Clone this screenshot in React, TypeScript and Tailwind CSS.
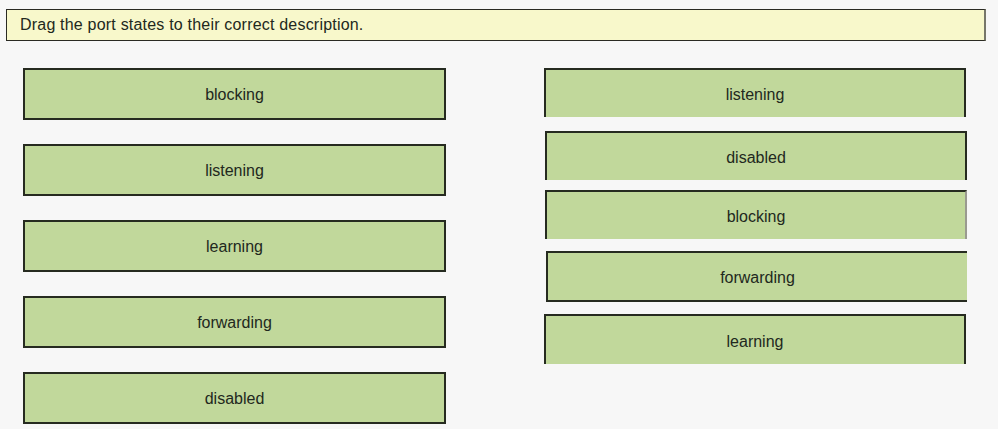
const leftItems = ["blocking", "listening", "learning", "forwarding", "disabled"];

// right column: the cards sit a little unevenly and some edges are missing
const rightItems = [
  { label: "listening", cls: "mt-0 ml-0 w-[422px] h-[49px] border-t-2 border-l-2 border-r-2" },
  { label: "disabled", cls: "mt-[14px] ml-[1px] w-[422px] h-[49px] border-t-2 border-l-2 border-r-2" },
  { label: "blocking", cls: "mt-[10px] ml-[1px] w-[422px] h-[49px] border-t-2 border-l-2 border-r-2 border-r-[#9a9a90]" },
  { label: "forwarding", cls: "mt-[12px] ml-[2px] w-[421px] h-[51px] border-t-2 border-l-2 border-b-2" },
  { label: "learning", cls: "mt-[12px] ml-0 w-[422px] h-[50px] border-t-2 border-l-2 border-r-2" },
];

export default function App() {
  return (
    <div
      className="w-[998px] h-[429px] bg-[#f7f7f7] overflow-hidden text-[#222820]"
      style={{ fontFamily: '"Liberation Sans", Arial, sans-serif' }}
    >
      {/* instruction bar */}
      <div className="pt-[9px] pl-[6px]">
        <div className="w-[980px] h-[32px] bg-[#f8f8cb] border border-[#2a2a22] border-r-2 border-r-[#77776a] flex items-center pl-[13px] text-[16px] tracking-[0.2px]">
          Drag the port states to their correct description.
        </div>
      </div>

      <div className="flex pt-[27px]">
        {/* drag items */}
        <div className="ml-[23px] flex flex-col gap-[24px]">
          {leftItems.map((s) => (
            <div
              key={s}
              className="w-[423px] h-[52px] bg-[#c1d89b] border-2 border-[#262b20] flex items-center justify-center pt-[2px] text-[16px]"
            >
              {s}
            </div>
          ))}
        </div>

        {/* targets */}
        <div className="ml-[98px] flex flex-col">
          {rightItems.map((r) => (
            <div
              key={r.label}
              className={`${r.cls} bg-[#c1d89b] border-[#262b20] flex items-center justify-center pt-[3px] text-[16px]`}
            >
              {r.label}
            </div>
          ))}
        </div>
      </div>
    </div>
  );
}
